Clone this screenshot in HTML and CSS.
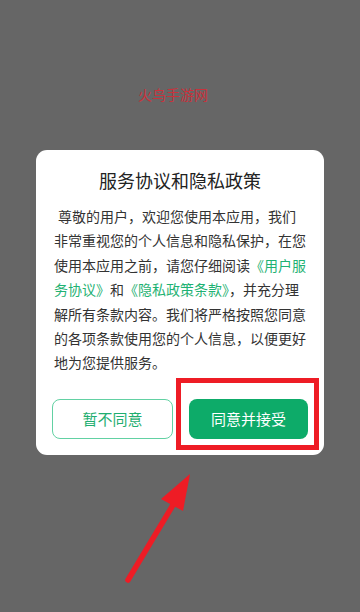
FILE: index.html
```html
<!DOCTYPE html>
<html lang="zh-CN">
<head>
    <meta charset="UTF-8">
    <meta name="viewport" content="width=device-width, initial-scale=1.0">
    <title>服务协议和隐私政策</title>
    <link rel="stylesheet" href="styles.css">
</head>
<body>
    <div class="screen">
        <div class="watermark">火鸟手游网</div>

        <div class="dialog">
            <h2 class="dialog-title">服务协议和隐私政策</h2>
            <p class="dialog-text">
                <span class="first">尊敬的用户，欢迎您使用本应用，我们</span><br>
                非常重视您的个人信息和隐私保护，在您<br>
                使用本应用之前，请您仔细阅读<a class="link" href="#">《用户服<br>务协议》</a>和<a class="link" href="#">《隐私政策条款》</a>，并充分理<br>
                解所有条款内容。我们将严格按照您同意<br>
                的各项条款使用您的个人信息，以便更好<br>
                地为您提供服务。
            </p>
            <div class="dialog-actions">
                <button class="btn btn-outline">暂不同意</button>
                <button class="btn btn-primary">同意并接受</button>
            </div>
        </div>

        <!-- пометка поверх скриншота -->
        <div class="highlight"></div>
        <svg class="arrow" width="360" height="612" viewBox="0 0 360 612">
            <line x1="128" y1="580" x2="176" y2="500" stroke="#ee1c25" stroke-width="5.5" stroke-linecap="round"/>
            <polygon points="190,474 161,499 183,511" fill="#ee1c25"/>
        </svg>
    </div>
</body>
</html>
```

FILE: styles.css
```css
* {
    box-sizing: border-box;
}

body {
    margin: 0;
    font-family: "Noto Sans CJK SC", "Noto Sans", sans-serif;
    background-color: #666666;
}

.screen {
    position: relative;
    width: 360px;
    height: 612px;
    padding-top: 150px;
    overflow: hidden;
}

.watermark {
    position: absolute;
    top: 84px;
    left: 138px;
    font-size: 14px;
    line-height: 20px;
    color: #c8323c;
}

.dialog {
    margin: 0 36px;
    background-color: #fff;
    border-radius: 11px;
    padding: 17px 16px 16px;
}

.dialog-title {
    margin: 0;
    font-size: 18px;
    font-weight: 400;
    line-height: 26px;
    text-align: center;
    color: #222;
}

.dialog-text {
    margin: 11px 2px 0;
    font-size: 14px;
    line-height: 24.4px;
    color: #333;
    white-space: nowrap;
}

.dialog-text .first {
    padding-left: 4px;
}

.link {
    color: #1fb273;
    text-decoration: none;
}

.dialog-actions {
    display: flex;
    gap: 16px;
    margin-top: 24px;
}

.btn {
    flex: 1;
    height: 40px;
    border-radius: 8px;
    font-family: inherit;
    font-size: 15px;
    cursor: pointer;
}

.btn-outline {
    background-color: #fff;
    border: 1.5px solid #62d1a3;
    color: #1fae70;
}

.btn-primary {
    background-color: #0dab69;
    border: none;
    color: #fff;
}

.highlight {
    position: absolute;
    left: 176px;
    top: 378px;
    width: 143px;
    height: 72px;
    border: 5px solid #ee1c25;
}

.arrow {
    position: absolute;
    left: 0;
    top: 0;
    pointer-events: none;
}
```
